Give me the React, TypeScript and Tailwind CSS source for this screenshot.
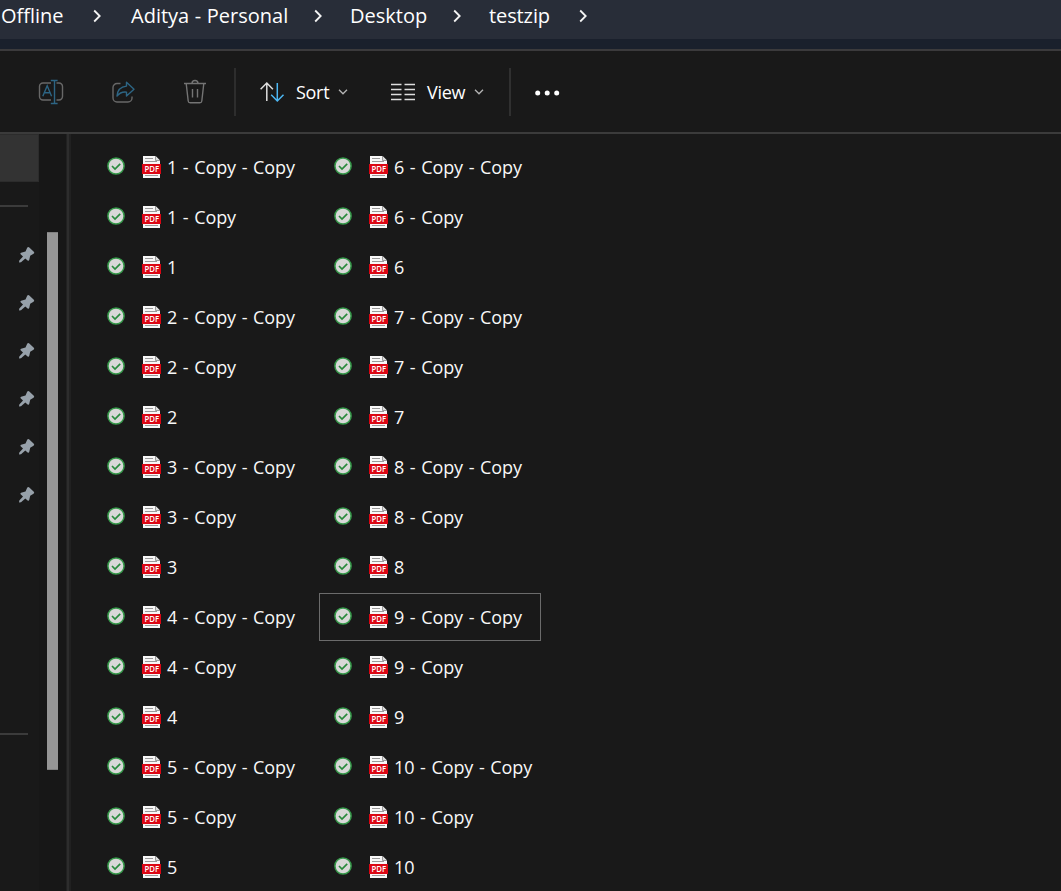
import React from "react";

const names = (from: number, to: number) =>
  Array.from({ length: to - from + 1 }, (_, i) => from + i).flatMap((n) => [
    `${n} - Copy - Copy`,
    `${n} - Copy`,
    `${n}`,
  ]);

const Chevron = () => (
  <svg width="10" height="14" viewBox="0 0 10 14" fill="none" stroke="#f4f4f4" strokeWidth="1.8">
    <path d="M2.200 1.500 7.700 7 2.200 12.500" />
  </svg>
);

const Down = () => (
  <svg width="10" height="6" viewBox="0 0 10 6" fill="none" stroke="#b5b5b5" strokeWidth="1.3">
    <path d="M1 .8 5 4.8 9 .8" />
  </svg>
);

const Pin = () => (
  <svg className="relative top-px" width="18" height="18" viewBox="0 0 18 18" fill="#97a1aa">
    <path d="M9.300 1.600Q10.200 .6 11.300 1.400L15.800 5.700Q16.800 6.900 15.500 7.700L12.200 9.700 11.200 14.100Q10.600 15.400 9.600 14.400L7.300 12.400 3 16.300 1 16.400 1.300 14.400 5 10.500 2.600 8.200Q2 7 3.100 6.700L7.500 5.400Z" />
  </svg>
);

const Check = () => (
  <svg className="relative -top-px" width="18" height="18" viewBox="0 0 18 18" fill="none">
    <circle cx="9" cy="9" r="8.100" fill="#d8d8d8" stroke="#36994a" strokeWidth="1.500" />
    <path d="m5 9 3 3 5.200-5.200" stroke="#278a3c" strokeWidth="1.700" />
  </svg>
);

const Pdf = () => (
  <svg width="19" height="22" viewBox="0 0 19 22">
    <path d="M1 0h12.500L18 4.500V22H1Z" fill="#f7f7f7" />
    <path d="M13.500 0v4.500H18" fill="#ddd" stroke="#888" strokeWidth=".8" />
    <path d="M3 2.500h8M3 5.500h12M3 19.500h13" stroke="#9a9a9a" strokeWidth="1" />
    <path d="M0 8h19v10H0Z" fill="#dc0714" />
    <text x="9.800" y="16" textAnchor="middle" fill="#fff" fontFamily="Open Sans, sans-serif" fontSize="8.300" fontWeight="600" textLength="14.600" lengthAdjust="spacingAndGlyphs">
      PDF
    </text>
  </svg>
);

const File = ({ name }: { name: string }) => (
  <div className="h-[50px] py-px">
    <div
      className={`flex h-12 items-center border pl-[14px] ${
        name === "9 - Copy - Copy" ? "border-[#6b6b6b]" : "border-transparent"
      }`}
    >
      <Check />
      <span className="w-[17px]" />
      <Pdf />
      <span className="pl-[6px] text-[18px] leading-6 tracking-[-0.1px] whitespace-nowrap text-[#f8f8f8] [word-spacing:1.1px]">{name}</span>
    </div>
  </div>
);

export default function App() {
  return (
    <div className="flex h-[891px] w-[1061px] flex-col overflow-hidden bg-[#191919] font-['Open_Sans',sans-serif] text-white">
      <nav className="flex h-[39px] shrink-0 items-start bg-[#282d38] text-[20px] leading-[32px] whitespace-nowrap">
        <span className="w-[92px] pl-px">Offline</span>
        <span className="flex h-8 w-[39px] items-center"><Chevron /></span>
        <span className="w-[182px] [word-spacing:0.4px]">Aditya - Personal</span>
        <span className="flex h-8 w-[37px] items-center"><Chevron /></span>
        <span className="w-[102px]">Desktop</span>
        <span className="flex h-8 w-[37px] items-center"><Chevron /></span>
        <span className="w-[89px] tracking-[-0.1px]">testzip</span>
        <span className="flex h-8 items-center"><Chevron /></span>
      </nav>
      <div className="h-3 shrink-0 border-b-2 border-[#3b3a3c] bg-[#1a202c]" />

      <div className="flex h-[83px] shrink-0 items-center border-b-2 border-[#3b3b3b] text-[18px]">
        <svg className="ml-[38px]" width="26" height="26" viewBox="0 0 26 26" fill="none" strokeWidth="1.4">
          <path d="M13 4H5a3.500 3.500 0 0 0-3.500 3.500v10A3.500 3.500 0 0 0 5 21h8M18.500 4H21a3.500 3.500 0 0 1 3.500 3.500v10A3.500 3.500 0 0 1 21 21h-2.500" stroke="#686868" />
          <path d="m4.800 17.200 4.400-10.500 4.400 10.500M6.300 13.800h5.800M12.800 1.500h6.800M12.800 24.500h6.800M16.500 1.500v23" stroke="#2d6584" />
        </svg>
        <svg className="ml-[47px]" width="26" height="26" viewBox="0 0 26 26" fill="none" strokeWidth="1.4" strokeLinejoin="round">
          <path d="M9.500 4.500H6a4 4 0 0 0-4 4v10.500a4 4 0 0 0 4 4h11a4 4 0 0 0 4-4V17.500" stroke="#686868" />
          <path d="M15.500 3.200 23 10.200l-7.500 6.800V13.100c-4-.5-7 .8-9.500 4 .3-5.500 3.500-9.400 9.500-10Z" stroke="#2d6584" />
        </svg>
        <svg className="ml-[45px]" width="26" height="26" viewBox="0 0 26 26" fill="none" stroke="#747474" strokeWidth="1.400">
          <path d="M2 4.500h22M10 4.500a3 3 0 0 1 6 0M4.200 4.500l2 17.500a2 2 0 0 0 2 1.800h9.600a2 2 0 0 0 2-1.800l2-17.500M10.500 10v8.500M15.500 10v8.500" />
        </svg>
        <span className="ml-[26px] h-12 w-0.5 bg-[#2d2d2d]" />
        <svg className="ml-6" width="25" height="22" viewBox="0 0 25 22" fill="none" strokeWidth="1.500">
          <path d="M6.800 20V2M.6 8.200 6.800 2l6.100 6.200" stroke="#dedede" />
          <path d="M17.300 2v18M11.200 13.800l6.100 6.200 6.200-6.200" stroke="#4db8f4" />
        </svg>
        <span className="ml-[11px] w-[42px] pt-0.5 tracking-[-0.3px]">Sort</span>
        <Down />
        <svg className="ml-[43px]" width="24" height="18" viewBox="0 0 24 18" stroke="#dedede" strokeWidth="1.400">
          <path d="M0 1.500h10.500M13.500 1.500H24M0 6.500h10.500M13.500 6.500H24M0 11.500h10.500M13.500 11.500H24M0 16.500h10.500M13.500 16.500H24" />
        </svg>
        <span className="ml-3 w-[47px] pt-0.5 tracking-[-0.3px]">View</span>
        <Down />
        <span className="ml-[25px] h-12 w-0.5 bg-[#303030]" />
        <svg className="ml-6 relative top-px" width="25" height="6" viewBox="0 0 25 6" fill="#fff">
          <circle cx="2.700" cy="3" r="2.500" /><circle cx="12.200" cy="3" r="2.500" /><circle cx="21.700" cy="3" r="2.500" />
        </svg>
      </div>

      <main className="flex min-h-0 flex-1">
        <aside className="flex w-[39px] shrink-0 flex-col">
          <div className="h-12 border-y border-r border-[#2c2c2c] bg-[#333333]" />
          <div className="mt-[23px] h-0.5 w-7 bg-[#3b3b3b]" />
          <div className="mt-[23px] flex flex-col pl-[18px]">
            {[0, 1, 2, 3, 4, 5].map((i) => (
              <div key={i} className="flex h-12 items-center"><Pin /></div>
            ))}
          </div>
          <div className="mt-[215px] h-0.5 w-7 bg-[#3b3b3b]" />
        </aside>
        <div className="w-[27px] shrink-0 bg-[#171717] pt-[98px] pl-2">
          <div className="h-[538px] w-[11px] border-y border-[#808080] bg-[#969696]" />
        </div>
        <div className="w-[5px] shrink-0 border-r-2 border-l border-[#212121] bg-[#2d2d2d]" />
        <section className="flex pt-2 pl-[21px]">
          <div className="w-[227px]">{names(1, 5).map((n) => <File key={n} name={n} />)}</div>
          <div className="w-[222px]">{names(6, 10).map((n) => <File key={n} name={n} />)}</div>
        </section>
      </main>
    </div>
  );
}
